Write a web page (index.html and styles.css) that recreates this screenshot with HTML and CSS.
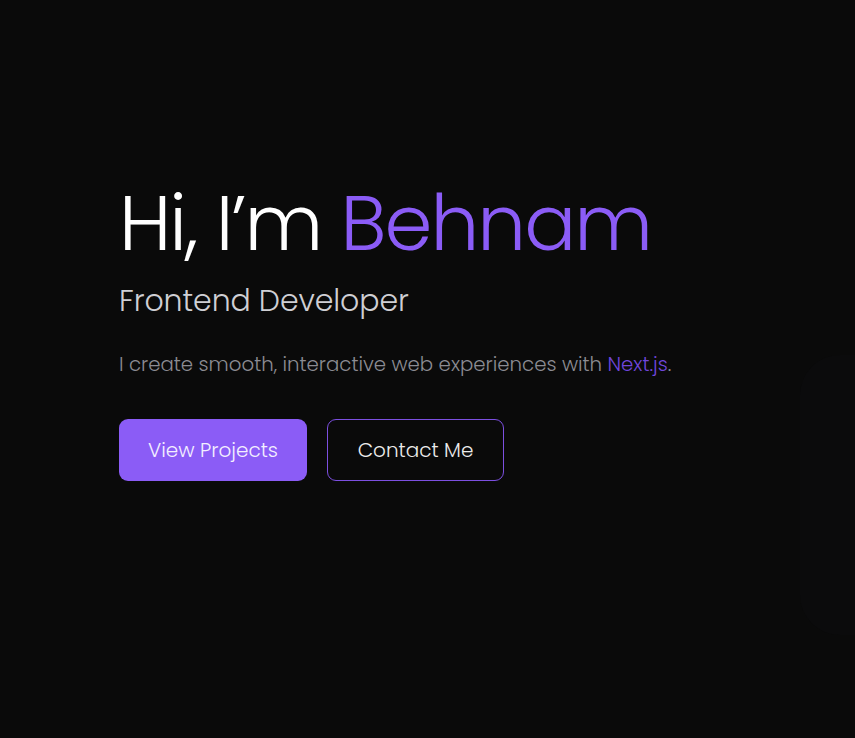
FILE: index.html
```html
<!DOCTYPE html>
<html lang="en">
<head>
<meta charset="utf-8">
<title>Behnam — Frontend Developer</title>
<link rel="stylesheet" href="styles.css">
</head>
<body>
<main class="hero">
  <div class="blob"></div>
  <div class="hero-content">
    <h1 class="title">Hi, I’m <span class="accent">Behnam</span></h1>
    <h2 class="subtitle">Frontend Developer</h2>
    <p class="lead">I create smooth, interactive web experiences with <span class="accent-soft">Next.js</span>.</p>
    <div class="actions">
      <a class="btn btn-primary" href="#projects">View Projects</a>
      <a class="btn btn-outline" href="#contact">Contact Me</a>
    </div>
  </div>
</main>
</body>
</html>
```
FILE: styles.css
```css
* { box-sizing: border-box; }
html, body { margin: 0; padding: 0; }
body {
  background: #0a0a0a;
  color: #ffffff;
  font-family: "Poppins", "Inter", "Noto Sans", sans-serif;
  font-weight: 300;
  overflow: hidden;
}
.hero {
  position: relative;
  height: 738px;
  overflow: hidden;
  padding: 177px 0 0 119px;
}
.blob {
  position: absolute;
  left: 800px;
  top: 355px;
  width: 120px;
  height: 280px;
  border-radius: 40px;
  background: #0b0b0c;
}
.hero-content {
  position: relative;
  display: flex;
  flex-direction: column;
  align-items: flex-start;
}
.title {
  margin: 0;
  font-size: 77px;
  font-weight: 300;
  line-height: 1.2;
  letter-spacing: -0.025em;
  color: #ffffff;
}
.accent { color: #8b5cf6; }
.subtitle {
  margin: 12px 0 0;
  font-size: 30px;
  font-weight: 300;
  line-height: 1.3;
  color: #cfcfd4;
  letter-spacing: -0.1px;
}
.lead {
  margin: 30px 0 0;
  font-size: 19.75px;
  font-weight: 300;
  line-height: 1.5;
  color: #8c8c93;
}
.accent-soft { color: #7046dc; }
.actions {
  display: flex;
  gap: 20px;
  margin-top: 39px;
}
.btn {
  display: inline-flex;
  align-items: center;
  justify-content: center;
  height: 62px;
  font-size: 20px;
  font-weight: 300;
  text-decoration: none;
  border-radius: 9px;
}
.btn-primary {
  width: 188px;
  background: #8b5cf6;
  color: #f3efff;
}
.btn-outline {
  width: 177px;
  border: 1px solid #7c4fe0;
  color: #ececec;
  background: transparent;
}
```
